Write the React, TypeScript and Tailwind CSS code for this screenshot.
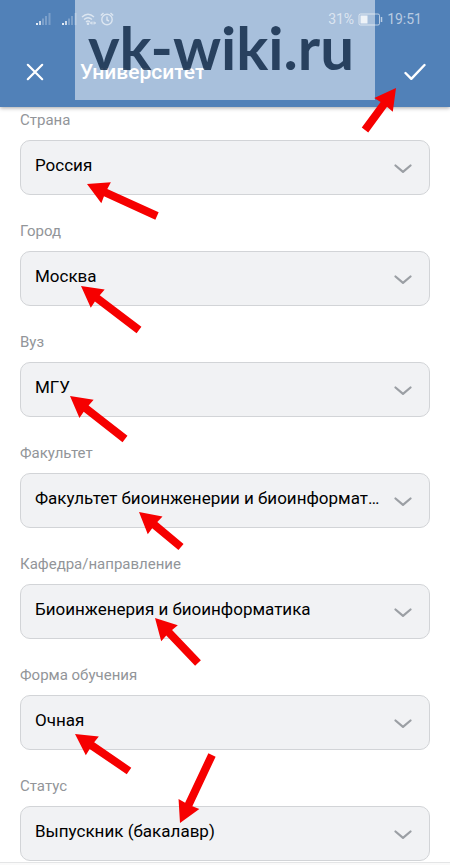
import { useId } from 'react';

type Field = { label: string; value: string };

const fields: Field[] = [
  { label: 'Страна', value: 'Россия' },
  { label: 'Город', value: 'Москва' },
  { label: 'Вуз', value: 'МГУ' },
  { label: 'Факультет', value: 'Факультет биоинженерии и биоинформатики' },
  { label: 'Кафедра/направление', value: 'Биоинженерия и биоинформатика' },
  { label: 'Форма обучения', value: 'Очная' },
  { label: 'Статус', value: 'Выпускник (бакалавр)' },
];

// [tip x, tip y, tail x, tail y]
const arrows = [
  [396, 88, 365, 130],
  [87, 184, 157, 216],
  [81, 286, 139, 330],
  [70, 396, 125, 439],
  [139, 512, 181, 547],
  [155, 618, 198, 663],
  [75, 734, 129, 771],
  [180, 823, 212, 755],
];

function Arrow({ points }: { points: number[] }) {
  const [x1, y1, x2, y2] = points;
  const length = Math.hypot(x2 - x1, y2 - y1);
  const angle = (Math.atan2(y2 - y1, x2 - x1) * 180) / Math.PI;

  return (
    <polygon
      fill="#f60000"
      transform={`translate(${x1} ${y1}) rotate(${angle})`}
      points={`0,0 21,-11.5 20.5,-4 ${length},-4 ${length},4 20.5,4 21,11.5`}
    />
  );
}

function Signal() {
  return (
    <svg viewBox="0 0 15 13" className="h-[13px] w-[15px]" fill="#fff">
      <rect x="0" y="10" width="2" height="2" opacity=".85" />
      <rect x="3" y="8" width="2" height="4" opacity=".7" />
      <rect x="6" y="5.5" width="2" height="6.5" opacity=".25" />
      <rect x="9" y="3" width="2" height="9" opacity=".25" />
      <rect x="12.5" y="0" width="2" height="12" opacity=".25" />
    </svg>
  );
}

function StatusBar() {
  return (
    <div className="flex h-[38px] items-center pl-9 pr-7 text-white/60">
      <Signal />
      <div className="w-[11px]" />
      <Signal />
      <svg viewBox="0 0 15 12" className="ml-1 h-3 w-[15px]" fill="none" stroke="currentColor" strokeWidth="1.4">
        <path d="M1 4Q7 -1.500 13 4M3 6.500Q7 3 11 6.500M5 9Q7 7.200 9 9" />
        <circle cx="7" cy="10.800" r=".6" />
        <path d="M9.500 10h5M11 8.500 9.500 10 11 11.500M13 8.500 14.500 10 13 11.500" strokeWidth="1" />
      </svg>
      <svg viewBox="0 0 14 14" className="ml-1 size-[14px]" fill="none" stroke="currentColor" strokeWidth="1.4">
        <circle cx="7" cy="7.500" r="5.200" />
        <path d="M7 4.500V8L9 9M.8 3.500 3.500 1M13.200 3.500 10.500 1" />
      </svg>
      <span className="ml-auto text-[14px]">31%</span>
      <svg viewBox="0 0 25 13" className="mx-1 h-[13px] w-[25px]" fill="none" stroke="currentColor">
        <rect x="1" y="1" width="20.500" height="11" rx="1.500" />
        <rect x="2.500" y="2.500" width="7" height="8" fill="#fff" fillOpacity=".8" stroke="none" />
        <path d="M23.500 4v5" strokeWidth="1.500" />
      </svg>
      <span className="text-[14px]">19:51</span>
    </div>
  );
}

function Header() {
  return (
    <header className="relative h-[107px] bg-[#5181b8] shadow-[0_1px_4px_rgba(0,0,0,0.35)]">
      <div className="pointer-events-none absolute inset-x-[75px] top-0 h-[100px] bg-white/50" />
      <div className="relative">
        <StatusBar />
        <div className="flex h-[68px] items-center pl-[26px] pr-6">
          <button aria-label="Закрыть" className="text-white">
            <svg viewBox="0 0 18 18" className="size-[18px]" fill="none" stroke="currentColor" strokeWidth="2.2" strokeLinecap="round">
              <path d="M1.800 1.800 16.200 16.200M16.200 1.800 1.800 16.200" />
            </svg>
          </button>
          <h1 className="ml-9 text-[21px] font-medium leading-7 text-white">Университет</h1>
          <button aria-label="Готово" className="ml-auto text-white">
            <svg viewBox="0 0 22 18" className="h-[18px] w-[22px]" fill="none" stroke="currentColor" strokeWidth="2.4" strokeLinecap="round" strokeLinejoin="round">
              <path d="M1.500 10 7.300 15.800 20.500 2" />
            </svg>
          </button>
        </div>
      </div>
      <div className="pointer-events-none absolute inset-x-[75px] top-0 flex h-[100px] items-center justify-center pb-1.5 pr-2">
        <span className="font-[Lato,sans-serif] text-[60px] font-bold leading-none text-[#072040]/80">
          vk-wiki.ru
        </span>
      </div>
    </header>
  );
}

function SelectField({ label, value }: Field) {
  const id = useId();

  return (
    <div className="flex flex-col gap-2">
      <label htmlFor={id} className="text-[15px] leading-6 text-[#929599]">
        {label}
      </label>
      <div className="relative">
        <select
          id={id}
          defaultValue={value}
          className="block h-[55px] w-full appearance-none truncate rounded-[10px] border border-[#d2d4d7] bg-[#f1f2f4] pl-[14px] pr-12 pb-1 text-[17px] text-black outline-none"
        >
          <option>{value}</option>
        </select>
        <svg
          viewBox="0 0 18 10"
          className="pointer-events-none absolute right-[18px] top-6 h-[10px] w-[18px]"
          fill="none"
          stroke="#9b9fa4"
          strokeWidth="2.200"
          strokeLinecap="round"
          strokeLinejoin="round"
        >
          <path d="M1.500 1.500 9 7.800 16.500 1.500" />
        </svg>
      </div>
    </div>
  );
}

export default function App() {
  return (
    <div className="relative min-h-screen overflow-hidden bg-white font-[Roboto,sans-serif]">
      <Header />
      <main className="flex flex-col gap-6 px-5 pt-px">
        {fields.map((field) => (
          <SelectField key={field.label} {...field} />
        ))}
      </main>
      <footer className="mt-px h-[3px] border-t border-[#e4e5e6] bg-[#fafafa]" />
      <svg className="pointer-events-none absolute left-0 top-0 h-[865px] w-[450px]" viewBox="0 0 450 865" aria-hidden="true">
        {arrows.map((points) => (
          <Arrow key={points.join()} points={points} />
        ))}
      </svg>
    </div>
  );
}
